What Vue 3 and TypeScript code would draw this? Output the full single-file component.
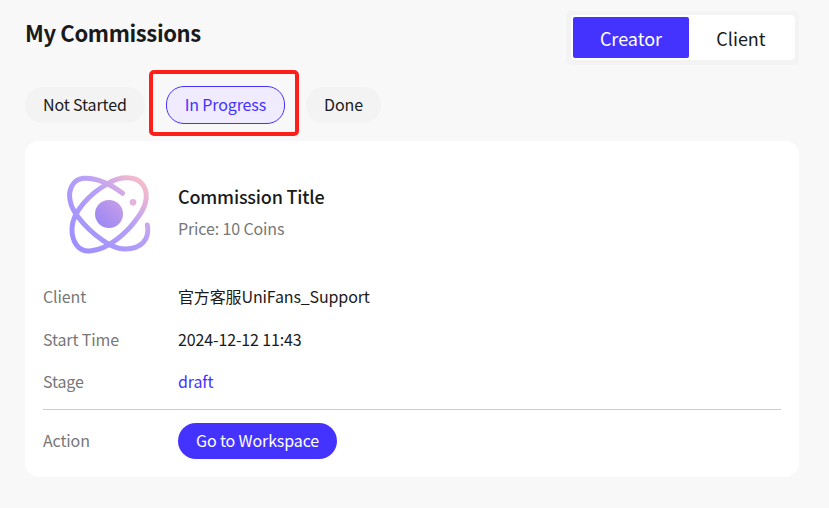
<script setup lang="ts">
const tabs = [
  { label: 'Not Started', active: false },
  { label: 'In Progress', active: true },
  { label: 'Done', active: false },
]

const rows = [
  { label: 'Client', value: '官方客服UniFans_Support', link: false },
  { label: 'Start Time', value: '2024-12-12 11:43', link: false },
  { label: 'Stage', value: 'draft', link: true },
]
</script>

<template>
  <div class="page">
    <header class="header">
      <h1 class="title">My Commissions</h1>
      <div class="switch-frame">
        <div class="switch">
          <button class="switch-btn on">Creator</button>
          <button class="switch-btn">Client</button>
        </div>
      </div>
    </header>

    <nav class="tabs">
      <div v-for="tab in tabs" :key="tab.label" class="tab" :class="{ active: tab.active }">
        {{ tab.label }}
        <span v-if="tab.active" class="marker"></span>
      </div>
    </nav>

    <section class="card">
      <div class="summary">
        <svg class="logo" viewBox="60 60 300 270" fill="none">
          <defs>
            <linearGradient id="orbit" gradientUnits="userSpaceOnUse" x1="100" y1="290" x2="300" y2="85">
              <stop offset="0" stop-color="#9c8fff" />
              <stop offset="0.6" stop-color="#b8a0f8" />
              <stop offset="1" stop-color="#f8bcc9" />
            </linearGradient>
            <linearGradient id="core" gradientUnits="userSpaceOnUse" x1="178" y1="222" x2="236" y2="162">
              <stop offset="0" stop-color="#9d88f4" />
              <stop offset="1" stop-color="#c19ce9" />
            </linearGradient>
          </defs>
          <path
            d="M205 100 C240 78 285 78 305 100 C325 122 325 160 295 200 C265 245 205 300 150 303 C115 305 95 275 96 235 C97 185 150 130 205 100 Z"
            stroke="url(#orbit)"
            stroke-width="15"
          />
          <path
            d="M248 130 C215 105 170 82 130 85 C95 88 85 125 90 150 C95 190 150 250 210 285 C250 305 300 300 318 265 C325 250 324 235 322 225"
            stroke="url(#orbit)"
            stroke-width="15"
            stroke-linecap="round"
          />
          <circle cx="207" cy="192" r="42" fill="url(#core)" />
          <circle cx="279" cy="157" r="10" fill="#e3b3dc" />
        </svg>
        <div class="summary-text">
          <div class="name">Commission Title</div>
          <div class="price">Price: 10 Coins</div>
        </div>
      </div>

      <div v-for="row in rows" :key="row.label" class="row">
        <span class="label">{{ row.label }}</span>
        <span class="value" :class="{ link: row.link }">{{ row.value }}</span>
      </div>

      <div class="row action">
        <span class="label">Action</span>
        <button class="go">Go to Workspace</button>
      </div>
    </section>
  </div>
</template>

<style>
body {
  background: #f8f8f8;
}
</style>

<style scoped>
.page {
  box-sizing: border-box;
  width: 829px;
  height: 508px;
  padding: 11px 30px 0 25px;
  background: #f8f8f8;
  font-family: 'Noto Sans CJK SC', 'Noto Sans', sans-serif;
  color: #1a1a1a;
}

.header {
  display: flex;
  justify-content: space-between;
  align-items: flex-start;
}

.title {
  margin: 5px 0 0;
  font-size: 22px;
  line-height: 32px;
  font-weight: 700;
  letter-spacing: -0.36px;
}

.switch-frame {
  padding: 4px 4px 5px 5px;
  background: #f3f3f3;
  border-radius: 5px;
}

.switch {
  display: flex;
  padding: 2px;
  width: 224px;
  box-sizing: border-box;
  background: #fff;
  border-radius: 4px;
}

.switch-btn {
  flex: 1;
  height: 41px;
  border: none;
  border-radius: 2px;
  background: transparent;
  font: inherit;
  font-size: 18px;
  color: #1a1a1a;
}

.switch-btn.on {
  flex: none;
  width: 116px;
  background: #4433ff;
  color: #fff;
}

.tabs {
  display: flex;
  align-items: center;
  gap: 21px;
  margin-top: 21px;
}

.tab {
  position: relative;
  padding: 0 18px;
  height: 36px;
  line-height: 34px;
  border-radius: 18px;
  background: #f3f3f3;
  font-size: 16px;
  letter-spacing: -0.13px;
}

.tab.active {
  height: 36px;
  border: 1px solid #4433ff;
  background: #f0ebff;
  color: #4433ff;
}

.marker {
  position: absolute;
  left: -18px;
  top: -17px;
  width: 142px;
  height: 58px;
  border: 4px solid #ff1f1a;
  border-radius: 5px;
}

.card {
  margin-top: 17px;
  height: 336px;
  box-sizing: border-box;
  padding: 25px 18px 0;
  background: #fff;
  border-radius: 14px;
}

.summary {
  display: flex;
  align-items: center;
  height: 96px;
  margin-bottom: 13px;
}

.logo {
  flex: none;
  margin: 2px 0 0 17px;
  width: 100px;
  height: 90px;
}

.summary-text {
  margin-left: 18px;
  margin-bottom: 6px;
}

.name {
  font-size: 18px;
  line-height: 26px;
  font-weight: 500;
  letter-spacing: -0.19px;
}

.price {
  margin-top: 7px;
  font-size: 16px;
  line-height: 24px;
  color: #777;
  letter-spacing: -0.13px;
}

.row {
  display: flex;
  align-items: center;
  height: 42.5px;
  font-size: 16px;
  letter-spacing: -0.13px;
}

.label {
  flex: none;
  width: 135px;
  color: #777;
}

.link {
  color: #4433ff;
}

.action {
  height: 63px;
  margin-top: 6px;
  border-top: 1px solid #ccc;
}

.action .label {
  margin-bottom: 2px;
}

.go {
  height: 36px;
  padding: 0 18px 2px;
  border: none;
  border-radius: 18px;
  background: #4433ff;
  color: #fff;
  font: inherit;
  font-size: 16px;
  letter-spacing: -0.13px;
}
</style>
